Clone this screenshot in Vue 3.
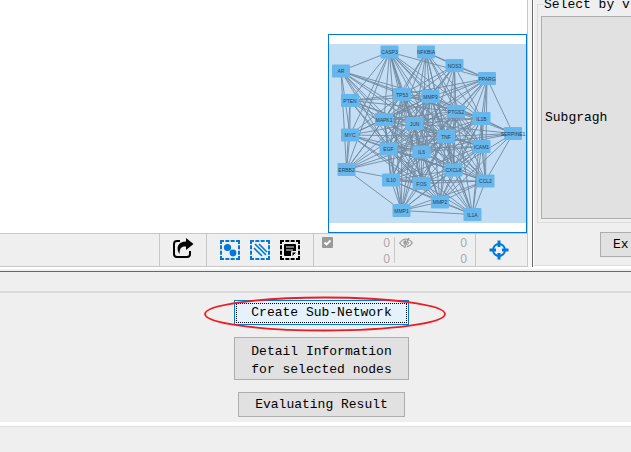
<script setup>
import { computed } from 'vue'

const nodes = {
  CASP3: [389.5, 52], NFKBIA: [426, 52], NOS3: [454.5, 65.5], AR: [341, 71],
  PPARG: [487, 78.5], PTEN: [350, 100.5], TP53: [402, 94.5], MMP9: [430.5, 96.5],
  PTGS2: [456, 111.5], IL1B: [481.5, 118.5], MAPK1: [384, 119.5], JUN: [414.5, 123.5],
  MYC: [350, 135], TNF: [446, 136.5], SERPINE1: [513, 133.5], EGF: [388.5, 149],
  IL6: [421.5, 152], ICAM1: [481.5, 146.5], ERBB2: [346.5, 169.5], IL10: [391, 180],
  FOS: [421.5, 183.5], CXCL8: [453.5, 170], CCL2: [485.5, 181], MMP2: [440, 202],
  MMP1: [401.5, 210.5], IL1A: [472.5, 214.5]
}

const core = ['TP53', 'MMP9', 'PTGS2', 'MAPK1', 'JUN', 'TNF', 'EGF', 'IL6', 'FOS', 'CXCL8', 'IL10', 'IL1B', 'ICAM1', 'CCL2', 'MMP2']

const outer = {
  CASP3: 'PTEN MAPK1 TP53 MMP9 PTGS2 IL1B JUN TNF IL6 FOS CXCL8 ICAM1 ERBB2 MYC MMP1 PPARG',
  NFKBIA: 'NOS3 TP53 MMP9 PTGS2 IL1B MAPK1 JUN TNF IL6 CXCL8 ICAM1 EGF PPARG',
  NOS3: 'PPARG TP53 MMP9 PTGS2 JUN TNF IL6 EGF MAPK1 IL1B CXCL8',
  AR: 'CASP3 TP53 MMP9 MAPK1 JUN EGF IL6 TNF PTGS2 MYC ERBB2 FOS',
  PPARG: 'TP53 MMP9 PTGS2 IL1B JUN TNF IL6 CXCL8 ICAM1 CCL2 EGF SERPINE1 MAPK1',
  PTEN: 'TP53 MMP9 MAPK1 JUN EGF TNF IL6 PTGS2 MYC ERBB2 FOS',
  MYC: 'TP53 MMP9 MAPK1 JUN TNF EGF IL6 ERBB2 FOS CXCL8 MMP2',
  SERPINE1: 'TNF IL6 IL1B CCL2 MMP9 CXCL8 EGF JUN MMP2 PTGS2',
  ERBB2: 'TP53 MAPK1 JUN EGF IL6 MMP9 MMP1 FOS TNF',
  MMP1: 'TP53 MMP9 MAPK1 JUN TNF EGF IL6 IL10 FOS CXCL8 CCL2 MMP2 ICAM1 IL1A',
  IL1A: 'IL6 TNF JUN EGF FOS CXCL8 CCL2 MMP2 IL10 IL1B ICAM1 MMP9 PTGS2'
}

const edges = computed(() => {
  const list = []
  core.forEach((a, i) => core.slice(i + 1).forEach(b => list.push([nodes[a], nodes[b]])))
  Object.entries(outer).forEach(([a, names]) =>
    names.split(' ').forEach(b => list.push([nodes[a], nodes[b]])))
  return list
})
</script>

<template>
  <main class="app">
    <div class="workspace">
      <section class="network">
        <div class="canvas">
          <div class="overview">
            <svg class="graph" viewBox="329 35 197 197" role="img" aria-label="Network overview">
              <rect class="viewport" x="329" y="44" width="197" height="179" />
              <line v-for="([a, b], i) in edges" :key="i" class="edge" :x1="a[0]" :y1="a[1]" :x2="b[0]" :y2="b[1]" />
              <g v-for="([x, y], name) in nodes" :key="name">
                <rect class="node" :x="x - 9" :y="y - 6.5" width="18" height="13" rx="1" />
                <text class="node-name" :x="x" :y="y + 2">{{ name }}</text>
              </g>
            </svg>
          </div>
        </div>
        <div class="toolbar">
          <div class="cell share">
            <button class="tool" aria-label="Share">
              <svg width="22" height="22" viewBox="0 0 22 22">
                <path d="M8 4H5Q2 4 2 7V17Q2 20 5 20H15Q18 20 18 17V14" fill="none" stroke="#000" stroke-width="2" />
                <path d="M14 1L21.500 7L14 13V9.500C9.500 9.300 7.500 11 7.600 17C3.500 11.500 5.500 4.500 14 4.500Z" />
              </svg>
            </button>
          </div>
          <div class="cell modes">
            <button class="tool blue" aria-label="Select nodes">
              <svg width="20" height="20" viewBox="0 0 20 20">
                <path class="dashes" d="M0 1H20M0 19H20M1 0V20M19 0V20" />
                <circle cx="7.500" cy="7.500" r="3.600" /><circle cx="13" cy="13" r="3.400" />
              </svg>
            </button>
            <button class="tool blue" aria-label="Select edges">
              <svg width="20" height="20" viewBox="0 0 20 20">
                <path class="dashes" d="M0 1H20M0 19H20M1 0V20M19 0V20" />
                <path d="M4 8L12 16M5 4L16 15M9 4L17 12" fill="none" stroke="currentColor" stroke-width="1.600" />
              </svg>
            </button>
            <button class="tool" aria-label="Select annotations">
              <svg width="20" height="20" viewBox="0 0 20 20">
                <path class="dashes" d="M0 1H20M0 19H20M1 0V20M19 0V20" />
                <path d="M5 4H15Q16 4 16 5V11H12Q11 11 11 12V16H5Q4 16 4 15V5Q4 4 5 4ZM12.500 16V12.500H16Z" />
                <path d="M6 7H14M6 10H13" stroke="#efefef" stroke-width="1" />
              </svg>
            </button>
          </div>
          <div class="cell stats">
            <div class="stat selected">
              <svg width="11" height="11" viewBox="0 0 11 11">
                <rect width="11" height="11" rx="1" fill="#999" />
                <path d="M2.500 5.500L4.500 7.500L8.500 3.500" fill="none" stroke="#fff" stroke-width="1.800" />
              </svg>
              <div class="counts"><span>0</span><span>0</span></div>
            </div>
            <div class="stat hidden">
              <svg width="14" height="12" viewBox="0 0 14 12" fill="none" stroke="#999">
                <path d="M5.500 9.700Q2.500 9 .7 6Q3.500 2 7 2L9 2.300M10.500 3Q12.300 4.200 13.300 6Q11.500 9 8 9.800" stroke-width="1.200" />
                <path d="M10 1L5.500 11" stroke-width="1.400" />
                <path d="M7 3Q4 3.500 4.300 6Q4.600 7.500 5.800 8L7.500 4.500Z" fill="#999" stroke="none" />
                <path d="M9.800 5Q10 7 8.200 8" />
              </svg>
              <div class="counts"><span>0</span><span>0</span></div>
            </div>
          </div>
          <div class="cell locate">
            <button class="tool blue" aria-label="Fit network">
              <svg width="20" height="20" viewBox="0 0 20 20" fill="none" stroke="currentColor">
                <circle cx="10" cy="10" r="6" stroke-width="1.800" />
                <path d="M10 .5V7M10 13V19.500M.5 10H7M13 10H19.500" stroke-width="3" />
              </svg>
            </button>
          </div>
        </div>
      </section>
      <aside class="filters">
        <fieldset class="group">
          <legend>Select by v</legend>
          <button class="btn subgraph">Subgragh</button>
        </fieldset>
        <button class="btn export">Ex</button>
      </aside>
    </div>
    <section class="results">
      <div class="actions">
        <div class="highlighted">
          <button class="btn primary"><span>Create Sub-Network</span></button>
          <svg class="ring" viewBox="0 0 242 36" aria-hidden="true">
            <ellipse cx="121" cy="18" rx="120" ry="16.500" />
          </svg>
        </div>
        <button class="btn detail">Detail Information<br />for selected nodes</button>
        <button class="btn evaluate">Evaluating Result</button>
      </div>
    </section>
    <footer class="status"></footer>
  </main>
</template>

<style>
body {
  margin: 0;
  background: #efefef;
}
</style>

<style scoped>
.app {
  display: flex;
  flex-direction: column;
  min-height: 100vh;
  overflow: hidden;
  background: #efefef;
  color: #000;
  font: 13px/18px "Liberation Mono", monospace;
}
.workspace {
  display: flex;
  border-bottom: 2px solid #fff;
}
.network {
  flex: 1;
  min-width: 0;
  padding-right: 4px;
  border-right: 1px solid #696969;
  background: #f8f8f8;
}
.canvas {
  display: flex;
  justify-content: flex-end;
  padding-top: 34px;
  border-right: 1px solid #c8c8c8;
  background: #fff;
}
.overview {
  width: 197px;
  border: 1px solid #0078d7;
}
.graph {
  display: block;
  width: 100%;
}
.viewport {
  fill: #c3def5;
}
.edge {
  stroke: #70899f;
  stroke-width: 0.9px;
}
.node {
  fill: #67b7ed;
}
.node-name {
  fill: #233f55;
  font: 5px "Liberation Sans", sans-serif;
  text-anchor: middle;
}
.toolbar {
  display: flex;
  height: 32px;
  justify-content: flex-end;
  border: 1px solid #c8c8c8;
  border-left: 0;
  background: #efefef;
}
.cell {
  display: flex;
  box-sizing: border-box;
  align-items: center;
  justify-content: center;
  border-left: 1px solid #c8c8c8;
}
.share {
  width: 47px;
  padding-bottom: 4px;
}
.modes {
  width: 107px;
  gap: 10px;
}
.stats {
  width: 162px;
  padding: 0 8px;
  justify-content: space-between;
}
.locate {
  width: 52px;
  padding-right: 6px;
}
.tool {
  display: block;
  padding: 0;
  border: 0;
  background: none;
  color: #000;
}
.tool svg {
  display: block;
}
.blue {
  color: #0078d7;
}
.tool svg:not([fill]) {
  fill: currentColor;
}
.dashes {
  fill: none;
  stroke: currentColor;
  stroke-width: 2px;
  stroke-dasharray: 4 1.333;
}
.stat {
  display: flex;
  justify-content: space-between;
  width: 68px;
  height: 26px;
}
.hidden {
  padding-left: 4px;
  border-left: 1px solid #c8c8c8;
}
.selected {
  padding-right: 4px;
}
.counts {
  display: flex;
  flex-direction: column;
  margin-top: -2px;
  color: #aaa;
  font: 12px/16px "Noto Sans", sans-serif;
}
.filters {
  width: 97px;
  border-left: 1px solid #fff;
  box-shadow: inset 0 -1px #fff, inset 0 -2px #dcdcdc;
}
.group {
  box-sizing: border-box;
  width: 200px;
  margin: -6px 0 0 3px;
  padding: 2px 3px 3px;
  border: 1px solid #dcdcdc;
}
.group legend {
  margin-left: 3px;
  padding: 2px 0 0;
  background: #efefef;
}
.btn {
  box-sizing: border-box;
  padding: 2px 12px;
  border: 1px solid #adadad;
  background: #e1e1e1;
  color: #000;
  font: inherit;
}
.subgraph {
  display: block;
  width: 100%;
  height: 203px;
  padding: 0 3px;
  text-align: left;
}
.export {
  display: block;
  width: 100px;
  height: 25px;
  margin: 9px 0 0 66px;
  text-align: left;
}
.results {
  margin-top: 2px;
  padding-top: 19px;
  border-top: 1px solid #696969;
  border-bottom: 4px solid #fff;
  background: linear-gradient(#d9d9d9, #d9d9d9) 0 19px / 100% 2px no-repeat;
}
.actions {
  display: flex;
  flex-direction: column;
  align-items: center;
  gap: 12px;
  padding: 9px 0 5px 12px;
}
.highlighted {
  position: relative;
}
.primary {
  display: block;
  width: 175px;
  height: 25px;
  padding: 1px;
  border-color: #0078d7;
  background: #e5f1fb;
}
.primary span {
  display: block;
  border: 1px dotted #000;
}
.ring {
  position: absolute;
  top: -4px;
  left: -30px;
  width: 242px;
  height: 36px;
  fill: none;
  stroke: #ed1c24;
  stroke-width: 1.8px;
  pointer-events: none;
}
.detail {
  width: 175px;
  height: 43px;
  padding-top: 5px;
}
.evaluate {
  width: 167px;
  height: 25px;
}
.status {
  flex: 1;
  min-height: 25px;
  border-top: 1px solid #dcdcdc;
}
</style>
